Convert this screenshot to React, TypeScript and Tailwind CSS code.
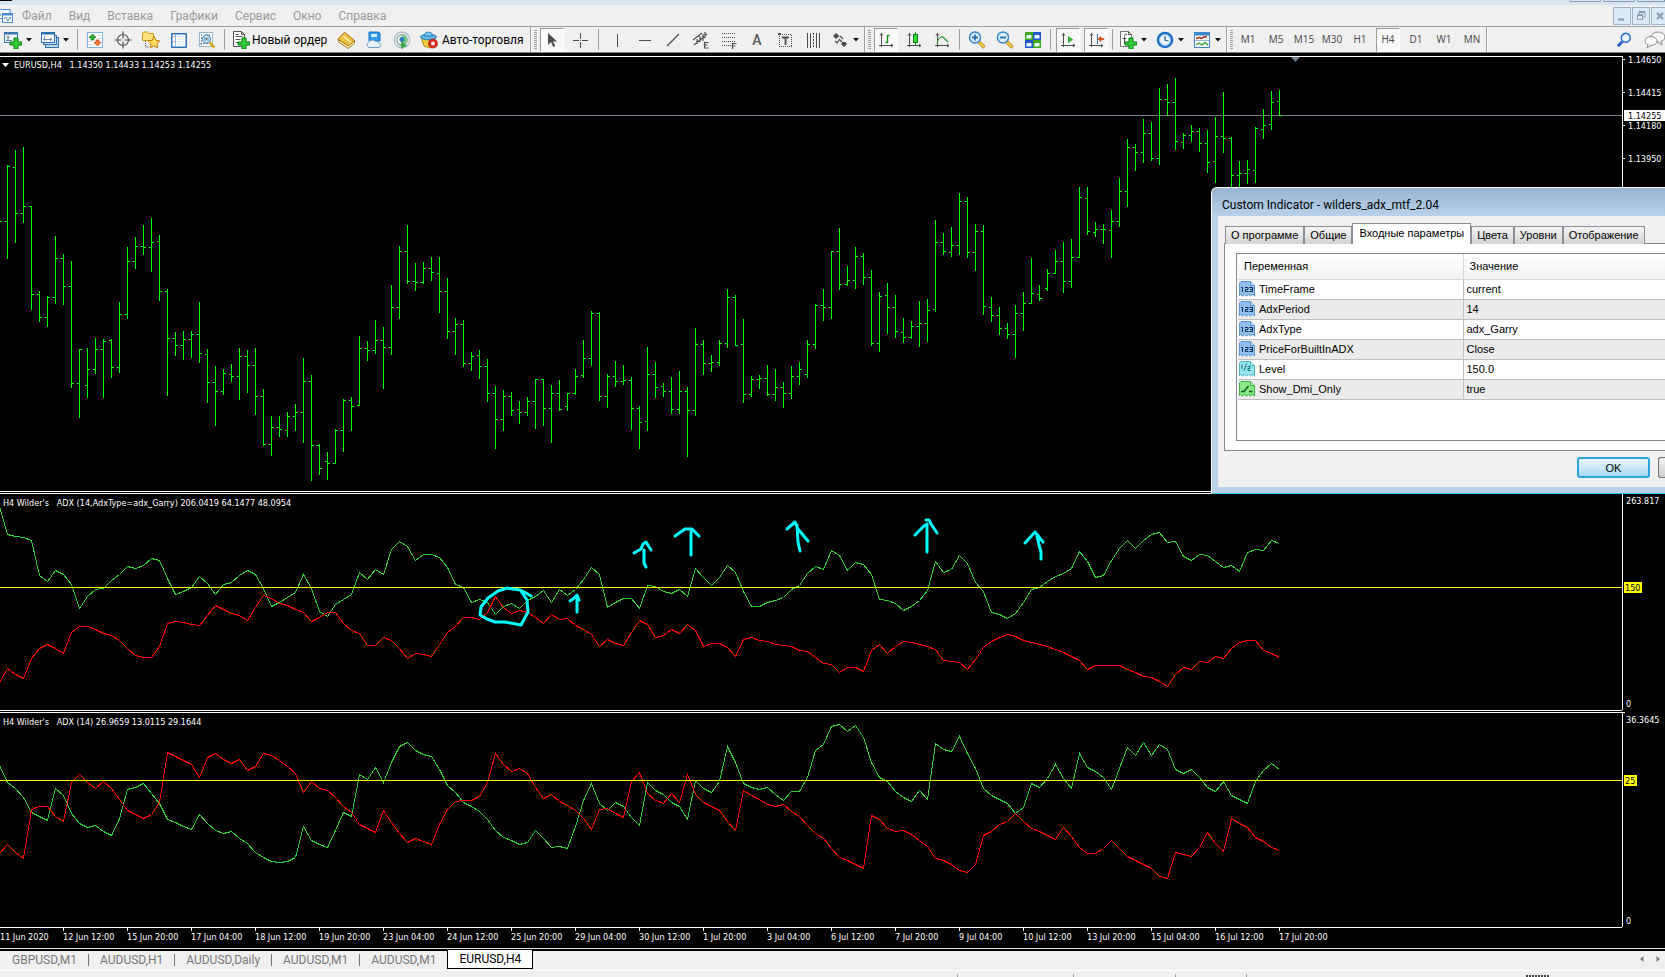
import type { ReactNode } from 'react';

// First bar sits one pixel left of the window, one bar every 8px
const STEP = 8;
const FIRST_X = -1;

// high, low, open, close
const bars: [number, number, number, number][] = [
  [200, 230, 221, 221],
  [165, 259, 221, 166], [150, 243, 167, 213], [147, 223, 213, 206], [206, 310, 206, 294],
  [291, 322, 294, 317], [296, 327, 317, 297], [236, 304, 297, 258], [254, 305, 258, 286],
  [261, 388, 286, 383], [349, 418, 383, 349], [348, 398, 385, 369], [338, 374, 369, 349],
  [339, 398, 349, 341], [339, 378, 340, 367], [302, 373, 367, 314], [247, 319, 314, 261],
  [237, 269, 261, 246], [225, 255, 246, 247], [218, 272, 247, 242], [235, 301, 241, 291],
  [289, 396, 291, 338], [332, 356, 338, 345], [331, 360, 345, 339], [331, 358, 339, 334],
  [302, 363, 334, 353], [349, 403, 354, 382], [366, 426, 382, 391], [369, 395, 391, 373],
  [364, 382, 374, 376], [348, 400, 376, 356], [350, 393, 356, 365], [348, 415, 365, 396],
  [389, 446, 396, 444], [416, 456, 444, 427], [416, 437, 427, 429], [412, 437, 430, 416],
  [404, 431, 416, 412], [358, 443, 412, 381], [375, 481, 381, 445], [444, 475, 445, 468],
  [452, 480, 461, 463], [429, 464, 463, 430], [399, 452, 430, 400], [397, 431, 400, 406],
  [336, 406, 405, 348], [341, 361, 348, 350], [320, 354, 350, 340], [327, 389, 340, 347],
  [285, 355, 347, 307], [246, 319, 307, 251], [225, 284, 251, 281], [263, 291, 281, 282],
  [262, 284, 282, 268], [257, 281, 268, 272], [257, 313, 273, 291], [278, 339, 291, 331],
  [318, 355, 331, 324], [320, 367, 324, 363], [352, 371, 363, 356], [350, 379, 355, 366],
  [359, 402, 366, 393], [386, 449, 393, 419], [390, 431, 419, 396], [392, 416, 396, 410],
  [401, 424, 409, 412], [397, 416, 412, 401], [379, 429, 401, 379], [379, 426, 379, 408],
  [385, 443, 408, 393], [380, 411, 393, 409], [393, 411, 406, 393], [369, 395, 393, 376],
  [340, 378, 375, 358], [311, 366, 358, 313], [312, 401, 313, 396], [374, 408, 396, 376],
  [361, 387, 376, 381], [365, 385, 381, 380], [377, 430, 380, 408], [406, 449, 408, 422],
  [347, 431, 421, 374], [362, 398, 374, 387], [383, 397, 386, 391], [377, 414, 391, 409],
  [371, 414, 409, 391], [387, 457, 391, 410], [328, 416, 410, 344], [340, 375, 344, 363],
  [355, 372, 363, 362], [340, 366, 362, 343], [289, 348, 343, 297], [295, 346, 297, 345],
  [319, 403, 344, 394], [376, 397, 394, 379], [375, 389, 379, 378], [365, 396, 378, 394],
  [369, 401, 394, 387], [382, 408, 387, 393], [366, 399, 393, 376], [362, 385, 376, 369],
  [340, 378, 374, 344], [304, 349, 344, 305], [289, 321, 305, 307], [251, 319, 307, 251],
  [228, 290, 251, 284], [266, 286, 284, 280], [247, 289, 280, 256], [253, 285, 256, 277],
  [270, 346, 277, 343], [292, 352, 343, 296], [283, 334, 295, 307], [295, 338, 307, 331],
  [318, 343, 332, 337], [321, 339, 337, 326], [301, 347, 326, 323], [299, 342, 323, 310],
  [220, 312, 309, 242], [233, 255, 242, 251], [227, 257, 252, 245], [193, 255, 245, 201],
  [197, 258, 201, 252], [224, 271, 252, 231], [225, 315, 231, 306], [297, 322, 307, 315],
  [307, 335, 315, 328], [323, 339, 328, 334], [305, 358, 334, 313], [292, 331, 313, 303],
  [258, 304, 303, 293], [285, 301, 294, 298], [269, 291, 288, 273], [250, 274, 273, 261],
  [242, 293, 261, 281], [239, 288, 281, 257], [187, 258, 257, 197], [187, 235, 198, 231],
  [222, 237, 232, 229], [224, 244, 229, 229], [210, 258, 230, 221], [178, 227, 221, 191],
  [139, 207, 191, 147], [144, 171, 147, 152], [119, 163, 152, 133], [122, 161, 133, 158],
  [88, 165, 158, 99], [84, 116, 99, 102], [78, 150, 102, 141], [133, 149, 142, 135],
  [125, 142, 135, 131], [128, 152, 131, 143], [130, 173, 143, 162], [117, 183, 161, 136],
  [92, 153, 136, 138], [137, 190, 138, 175], [161, 190, 175, 173], [160, 184, 173, 169],
  [127, 183, 170, 128], [109, 139, 129, 125], [91, 130, 124, 102], [90, 116, 101, 115],
];

const garryPlus = [
  506, 534, 536, 537, 540, 575, 581, 570, 574, 584, 608, 596, 589, 588, 580, 574, 566, 568, 565, 558,
  560, 578, 594, 591, 587, 576, 583, 594, 584, 582, 575, 570, 574, 588, 606, 602, 597, 592, 574, 588,
  611, 616, 604, 599, 594, 572, 579, 569, 574, 549, 541, 546, 560, 554, 554, 557, 567, 584, 587, 602,
  599, 602, 614, 606, 603, 608, 600, 596, 590, 602, 589, 595, 589, 579, 567, 574, 607, 602, 598, 598,
  608, 585, 586, 591, 593, 589, 596, 568, 577, 585, 577, 565, 572, 591, 606, 606, 602, 600, 597, 589,
  585, 573, 566, 569, 550, 555, 570, 562, 564, 574, 599, 600, 603, 610, 606, 600, 590, 561, 572, 569,
  555, 563, 582, 591, 612, 614, 618, 613, 602, 589, 587, 581, 576, 573, 568, 551, 561, 577, 575, 560,
  548, 540, 548, 540, 534, 532, 542, 541, 556, 560, 554, 555, 561, 567, 565, 571, 552, 549, 550, 540, 543,
];

const garryMinus = [
  682, 668, 674, 678, 658, 648, 644, 648, 653, 632, 626, 626, 629, 633, 635, 640, 648, 655, 657, 657,
  646, 623, 621, 622, 624, 625, 615, 605, 609, 613, 615, 620, 607, 595, 598, 603, 605, 609, 612, 621,
  617, 612, 612, 623, 630, 633, 645, 645, 637, 640, 648, 658, 653, 654, 656, 644, 632, 626, 617, 617,
  619, 612, 596, 607, 613, 610, 612, 617, 623, 614, 619, 618, 625, 629, 634, 646, 639, 643, 645, 632,
  620, 624, 637, 635, 629, 633, 624, 630, 646, 643, 643, 647, 656, 639, 637, 640, 641, 644, 645, 646,
  650, 651, 657, 663, 664, 672, 667, 667, 671, 650, 644, 653, 646, 641, 642, 644, 646, 649, 660, 661,
  662, 669, 659, 647, 641, 637, 634, 636, 640, 642, 644, 646, 649, 652, 656, 660, 669, 665, 665, 665,
  665, 669, 672, 676, 677, 681, 686, 674, 667, 669, 661, 662, 656, 658, 648, 642, 640, 640, 650, 653, 657,
];

const adxPlus = [
  765, 782, 788, 797, 812, 816, 820, 788, 795, 813, 823, 827, 825, 831, 835, 818, 789, 787, 783, 793,
  803, 819, 822, 826, 829, 814, 823, 830, 833, 831, 838, 843, 852, 857, 861, 862, 861, 857, 826, 840,
  844, 847, 830, 812, 816, 774, 779, 767, 782, 762, 746, 742, 750, 754, 756, 769, 785, 792, 802, 806,
  811, 819, 830, 837, 840, 844, 842, 830, 838, 847, 846, 848, 826, 800, 783, 803, 810, 802, 806, 817,
  825, 782, 790, 794, 802, 806, 819, 780, 788, 792, 781, 746, 762, 783, 787, 789, 787, 794, 800, 791,
  791, 777, 750, 744, 726, 724, 731, 725, 737, 762, 777, 781, 791, 797, 801, 790, 799, 743, 749, 751,
  736, 753, 768, 788, 795, 799, 803, 813, 807, 783, 787, 778, 764, 778, 788, 753, 767, 771, 777, 789,
  768, 747, 755, 742, 755, 744, 749, 769, 773, 769, 777, 787, 791, 781, 795, 799, 803, 781, 770, 763, 769,
];

const adxMinus = [
  853, 844, 852, 858, 809, 806, 806, 816, 821, 782, 774, 782, 788, 781, 788, 799, 810, 814, 818, 814,
  802, 752, 756, 760, 764, 777, 757, 753, 759, 763, 759, 770, 766, 753, 755, 760, 766, 773, 792, 781,
  788, 790, 797, 806, 812, 824, 828, 832, 810, 822, 833, 842, 838, 841, 844, 824, 809, 801, 800, 800,
  796, 782, 753, 764, 771, 768, 773, 787, 798, 794, 801, 805, 810, 818, 829, 809, 808, 813, 817, 781,
  772, 793, 800, 803, 793, 802, 774, 794, 802, 806, 810, 821, 830, 790, 795, 799, 804, 806, 804, 811,
  816, 825, 833, 838, 848, 857, 860, 864, 868, 815, 819, 828, 831, 830, 834, 840, 846, 858, 860, 864,
  870, 872, 864, 835, 831, 824, 821, 813, 821, 828, 831, 835, 839, 827, 836, 847, 853, 853, 848, 840,
  848, 856, 860, 864, 868, 876, 878, 852, 854, 856, 847, 832, 843, 851, 818, 823, 827, 837, 841, 847, 850,
];

const marks = [
  'M531 596 L526 593 L520 590 L507 588 L498 591 L488 598 L481 607 L480 615 L487 619 L495 622 L505 622 L521 625 L528 612 L527 600 L521 591',
  'M577 612 V596 M570 601 L573 599 L577 595 L579 600',
  'M644 550 V563 L646 567 M634 553 L641 549 L643 544 L646 542 L651 550',
  'M691 532 V555 M675 536 L685 529 H692 L699 536',
  'M797 525 L798 542 L800 551 M787 529 L795 522 L798 529 L808 541',
  'M927 524 V552 M915 535 L925 525 M926 520 H929 L931 524 L937 533',
  'M1025 543 L1035 532 L1043 542 M1037 536 L1039 545 L1041 552 V559',
];

const times = [
  '12 Jun 12:00', '15 Jun 20:00', '17 Jun 04:00', '18 Jun 12:00', '19 Jun 20:00', '23 Jun 04:00',
  '24 Jun 12:00', '25 Jun 20:00', '29 Jun 04:00', '30 Jun 12:00', '1 Jul 20:00', '3 Jul 04:00',
  '6 Jul 12:00', '7 Jul 20:00', '9 Jul 04:00', '10 Jul 12:00', '13 Jul 20:00', '15 Jul 04:00',
  '16 Jul 12:00', '17 Jul 20:00',
];

const menu = ['Файл', 'Вид', 'Вставка', 'Графики', 'Сервис', 'Окно', 'Справка'];
const periods = ['M1', 'M5', 'M15', 'M30', 'H1', 'H4', 'D1', 'W1', 'MN'];
const chartTabs = ['GBPUSD,M1', 'AUDUSD,H1', 'AUDUSD,Daily', 'AUDUSD,M1', 'AUDUSD,M1'];

const params = [
  { name: 'TimeFrame', value: 'current', kind: 'int' },
  { name: 'AdxPeriod', value: '14', kind: 'int' },
  { name: 'AdxType', value: 'adx_Garry', kind: 'int' },
  { name: 'PriceForBuiltInADX', value: 'Close', kind: 'int' },
  { name: 'Level', value: '150.0', kind: 'double' },
  { name: 'Show_Dmi_Only', value: 'true', kind: 'bool' },
];

function toPoints(values: number[]) {
  return values.map((y, i) => `${FIRST_X + i * STEP + 0.5},${y + 0.5}`).join(' ');
}

function Series({ values, color }: { values: number[]; color: string }) {
  return (
    <polyline
      points={toPoints(values)}
      fill="none"
      stroke={color}
      strokeWidth="1"
      shapeRendering="crispEdges"
    />
  );
}

/* ---------- toolbar icons ---------- */

function Icon({ children, size = 18 }: { children: ReactNode; size?: number }) {
  return (
    <svg width={size} height={size} viewBox="0 0 18 18" fill="none" className="shrink-0" aria-hidden="true">
      {children}
    </svg>
  );
}

const plus = (
  <path d="M10 7h4v4h4v3h-4v4h-4v-4H6v-3h4z" fill="#2fd02f" stroke="#0a7a12" strokeWidth="1" />
);

const NewChartIcon = () => (
  <Icon>
    <rect x="0.5" y="1.5" width="13" height="10" fill="#eef5fc" stroke="#3c78b4" />
    <path d="M1 2.5h12" stroke="#3c78b4" strokeWidth="2" />
    <path d="M4 5v5M2.500 6h3M2 9.500h6" stroke="#5f7f9f" />
    {plus}
  </Icon>
);

const ProfilesIcon = () => (
  <Icon>
    <rect x="4.500" y="6.500" width="13" height="10" fill="#b9d8f4" stroke="#2f6fb0" />
    <rect x="2.500" y="4.500" width="13" height="9" fill="#cfe3f6" stroke="#2f6fb0" />
    <rect x="0.500" y="1.500" width="13" height="10" fill="#fff" stroke="#2f6fb0" />
    <path d="M1 2.500h12" stroke="#2f6fb0" strokeWidth="2" />
    <path d="M3.500 5v5M2 8.500h9M9 7l2 1.500L9 10" stroke="#6a8cae" />
  </Icon>
);

const MarketWatchIcon = () => (
  <Icon>
    <rect x="1.500" y="1.500" width="15" height="15" fill="#fff" stroke="#7db3e8" />
    <path d="M12 4.500h3M12 7.500h3M3 10.500h3M3 13.500h4" stroke="#c5d5e5" />
    <path d="M6.500 3L10 6.500H8V9H5V6.500H3z" fill="#2db52d" stroke="#0b7a16" strokeWidth="0.7" />
    <path d="M11.500 15L8 11.500h2V9h3v2.500h2z" fill="#f08040" stroke="#c03a10" strokeWidth="0.7" />
  </Icon>
);

const DataWindowIcon = () => (
  <Icon>
    <circle cx="9" cy="9" r="5.500" stroke="#555" strokeWidth="1.200" />
    <path d="M9 0.500v7M9 10.500v7M0.500 9h7M10.500 9h7" stroke="#555" strokeWidth="1.200" />
  </Icon>
);

const NavigatorIcon = () => (
  <Icon>
    <path d="M0.500 2.500l1-1.500h4l1 1.500h5v7h-11z" fill="#ffe27a" stroke="#c79a1d" />
    <path d="M3.500 10v6h4" stroke="#444" strokeDasharray="1 1" />
    <path
      d="M12 5.500l1.900 3.900 4 .5-3 2.900.8 4.200-3.700-2.100L8.300 17l.8-4.200-3-2.900 4-.5z"
      fill="#ffd95c"
      stroke="#bf8410"
    />
  </Icon>
);

const TerminalIcon = () => (
  <Icon>
    <rect x="1" y="2" width="16" height="15" rx="1" fill="#2e6fb2" />
    <rect x="2.500" y="3.500" width="13" height="12" fill="#fff" />
    <path d="M5.500 4v11" stroke="#8fb8df" />
    <path d="M3.500 5.500h1M3.500 10.500h1" stroke="#e02a20" />
    <path d="M7 5.500h7M7 8h7M7 10.500h7M7 13h7" stroke="#cfdfee" />
  </Icon>
);

const TesterIcon = () => (
  <Icon>
    <rect x="1.500" y="1.500" width="13" height="14" fill="#fff" stroke="#9ab8d2" />
    <path d="M3.500 3v11M2 12.500h11M11.500 3v6" stroke="#7a8fa5" strokeDasharray="2 1" />
    <circle cx="8.500" cy="8" r="4" fill="#d7ecfb" stroke="#5b9bd0" strokeWidth="1.300" />
    <path d="M7 6v4M10 6v4M8.500 7v2" stroke="#5a7894" />
    <path d="M11.500 11.500l5 5" stroke="#d9a52c" strokeWidth="2.600" />
  </Icon>
);

const NewOrderIcon = () => (
  <Icon>
    <path d="M1.500 0.500h8l3 3v12h-11z" fill="#fff" stroke="#555" />
    <path d="M9.500 0.500v3h3M3.500 5.500h7M3.500 8.500h5M3.500 11.500h3M3.500 3.500h3" stroke="#555" />
    {plus}
  </Icon>
);

const MetaEditorIcon = () => (
  <Icon>
    <path d="M1 8.500l1 3 9.500 6 6-5.500v-2.500z" fill="#fff4cc" stroke="#a8720c" />
    <path d="M1 8.500C3 5.500 5 3 8 1.500l9.500 8-6 5.500z" fill="#eebf3e" stroke="#a8720c" />
    <path d="M6 5l8 6.500" stroke="#fbe7a0" strokeWidth="2" />
  </Icon>
);

const VpsIcon = () => (
  <Icon>
    <path d="M4 1h9l2 1v8H4z" fill="#2d9af0" stroke="#1673c0" />
    <path d="M6 3h6v3H6z" fill="#d9efff" />
    <path d="M4 16.500a3 3 0 010-5.500 4 4 0 016.500-.5 3 3 0 013.500 1.500 2.300 2.300 0 010 4.500z" fill="#e8f2fc" stroke="#7a9cc0" />
  </Icon>
);

const SignalsIcon = () => (
  <Icon>
    <circle cx="9" cy="9" r="7.800" stroke="#a9bccb" strokeWidth="1.200" />
    <circle cx="9" cy="9" r="5.300" stroke="#7fae95" strokeWidth="1.200" />
    <path d="M9 9l5 6.500A8 8 0 009 17z" fill="#3fae4a" />
    <path d="M9 4a5 5 0 013 9L9 9z" fill="#79c987" />
    <circle cx="9" cy="8.500" r="2.500" fill="#2d7ccb" />
    <path d="M9 10v7.500" stroke="#2f9a3c" strokeWidth="1.600" />
  </Icon>
);

const AutoTradeIcon = () => (
  <Icon>
    <path d="M1 6l3 9 7 2 4-10z" fill="#f5c93c" stroke="#b88a14" />
    <ellipse cx="8.500" cy="6" rx="8" ry="2.800" fill="#5fb7ea" stroke="#2c7fb8" />
    <path d="M4.500 5a4 4 0 018 0z" fill="#7fcaf4" stroke="#2c7fb8" />
    <circle cx="13" cy="12.500" r="4.500" fill="#e2261c" stroke="#a01008" strokeWidth="0.600" />
    <rect x="11.300" y="10.800" width="3.400" height="3.400" fill="#fff" />
  </Icon>
);

const CursorIcon = () => (
  <Icon>
    <path d="M5 2v12l3-3 2.300 5 2-1-2.300-4.500h4z" fill="#4d4d4d" />
  </Icon>
);

const CrosshairIcon = () => (
  <Icon>
    <path d="M9.500 2v5.500M9.500 11v5.500M2 9.500h5.500M11 9.500h6" stroke="#4d4d4d" shapeRendering="crispEdges" />
    <path d="M9.500 9v1" stroke="#4d4d4d" />
  </Icon>
);

const VLineIcon = () => <Icon><path d="M9.500 3v13" stroke="#4d4d4d" shapeRendering="crispEdges" /></Icon>;
const HLineIcon = () => <Icon><path d="M3 9.500h12" stroke="#4d4d4d" shapeRendering="crispEdges" /></Icon>;
const TrendIcon = () => <Icon><path d="M3 15L15 3" stroke="#4d4d4d" strokeWidth="1.200" /></Icon>;

const ChannelIcon = () => (
  <Icon>
    <path d="M1 9l9-7M2 14L15 3M5 8v5M8 5v6M11 3v7M13 1v6" stroke="#4d4d4d" strokeWidth="1.200" />
    <path d="M16.500 11.500h-4v5.500h4M12.500 14h3" stroke="#4d4d4d" strokeWidth="1.200" />
  </Icon>
);

const FiboIcon = () => (
  <Icon>
    <path d="M2 2.500h14M2 6.500h14M2 10.500h14M2 14.500h9" stroke="#4d4d4d" strokeDasharray="1 1" shapeRendering="crispEdges" />
    <path d="M16.500 12.500h-4V18M12.500 15h3" stroke="#4d4d4d" strokeWidth="1.200" />
  </Icon>
);

const LabelIcon = () => (
  <Icon>
    <rect x="3.500" y="3.500" width="12" height="12" stroke="#4d4d4d" strokeDasharray="1 1" shapeRendering="crispEdges" />
    <path d="M6 6.500h7M9.500 6.500V14" stroke="#4d4d4d" strokeWidth="1.800" />
    <path d="M2 2h3v2H2z" fill="#4d4d4d" />
  </Icon>
);

const CyclesIcon = () => (
  <Icon>
    <path d="M3.500 2v15M6.500 2v15M12.500 2v15M15.500 2v15" stroke="#4d4d4d" shapeRendering="crispEdges" />
    <path d="M9.500 2v15" stroke="#4d4d4d" strokeDasharray="2 1" shapeRendering="crispEdges" />
  </Icon>
);

const ShapesIcon = () => (
  <Icon>
    <path d="M5 2l3.500 3L5 8 2 5zM13 16l-3.500-3.500h7z M11 11h4v2h-4z" fill="#4d4d4d" />
    <path d="M4 10l2 2 2-3M8 8l3 3M9 5l3 3" stroke="#4d4d4d" strokeWidth="1.200" />
  </Icon>
);

const axes = (
  <path d="M4.500 2v14M2 14.500h14M3 4.500l1.500-2 1.500 2M14 13l2 1.500-2 1.500" stroke="#4d4d4d" />
);

const BarChartIcon = () => (
  <Icon>
    {axes}
    <path d="M10.500 4v8M10.500 4.500h2M8.500 11.500h2" stroke="#0b9a12" strokeWidth="1.400" />
  </Icon>
);

const CandleIcon = () => (
  <Icon>
    {axes}
    <path d="M10.500 1v13" stroke="#0b7a12" />
    <rect x="8.500" y="3.500" width="4" height="8" fill="#35dd35" stroke="#0b7a12" />
  </Icon>
);

const LineChartIcon = () => (
  <Icon>
    {axes}
    <path d="M4 12c2-6 5-8 7-5l4 4" stroke="#2a9a30" strokeWidth="1.200" />
  </Icon>
);

const ZoomIcon = ({ out }: { out?: boolean }) => (
  <Icon>
    <path d="M10.500 10.500l6 6" stroke="#b98a1e" strokeWidth="3.600" />
    <path d="M11 11l5 5" stroke="#f6cf4a" strokeWidth="2" />
    <circle cx="7" cy="6.500" r="5.500" fill="#d7ecfc" stroke="#3585cc" strokeWidth="1.400" />
    <path d={out ? 'M4 6.500h6' : 'M4 6.500h6M7 3.500v6'} stroke="#2f6fae" strokeWidth="1.800" />
  </Icon>
);

const TileIcon = () => (
  <Icon>
    <rect x="1" y="1" width="8" height="8" fill="#3fa71e" />
    <rect x="9" y="1" width="8" height="8" fill="#2458c8" />
    <rect x="1" y="9" width="8" height="8" fill="#2458c8" />
    <rect x="9" y="9" width="8" height="8" fill="#3fa71e" />
    <path d="M2.500 4h5v3.500h-5zM10.500 4h5v3.500h-5zM2.500 12h5v3.500h-5zM10.500 12h5v3.500h-5z" fill="#e8f3ff" />
  </Icon>
);

const AutoScrollIcon = () => (
  <Icon>
    {axes}
    <path d="M9.500 5.500l4 3-4 3z" fill="#2fc02f" stroke="#0b8a12" strokeWidth="0.600" />
  </Icon>
);

const ShiftIcon = () => (
  <Icon>
    {axes}
    <path d="M10.500 3v10" stroke="#2a78b8" />
    <path d="M11 8l3-2.500V7.500h3v1h-3v2z" fill="#e04a10" stroke="#c03a08" strokeWidth="0.600" />
  </Icon>
);

const IndicatorsIcon = () => (
  <Icon>
    <path d="M1.500 0.500h8l3 3v12h-11z" fill="#fff" stroke="#777" />
    <path d="M8 3.500c-2-1-2.500 0-2.500 2V13M3.500 7.500h4M9.500 0.500v3h3" stroke="#555" />
    {plus}
  </Icon>
);

const ClockIcon = () => (
  <Icon>
    <circle cx="9" cy="9" r="8.300" fill="#1f6fc8" />
    <circle cx="9" cy="9" r="5.500" fill="#eaf4ff" stroke="#8fc2f2" />
    <path d="M9 5v4l3.500 1" stroke="#355878" strokeWidth="1.200" />
  </Icon>
);

const TemplateIcon = () => (
  <Icon>
    <rect x="1.500" y="1.500" width="15" height="15" fill="#fff" stroke="#3d85cf" />
    <path d="M1 3h16" stroke="#3d85cf" strokeWidth="3" />
    <path d="M2 9.500h14" stroke="#9ab8d8" />
    <path d="M3 7.500l3-1 2 1 3-1.500 3-.5" stroke="#a82a12" strokeWidth="1.400" />
    <path d="M3 14l3-2 3 2 3-2.500 3 2.500" stroke="#2f9a30" strokeWidth="1.400" />
  </Icon>
);

/* ---------- toolbar parts ---------- */

function Caret() {
  return (
    <svg width="6" height="4" viewBox="0 0 6 4" className="shrink-0" aria-hidden="true">
      <path d="M0 0h6L3 3.500z" fill="#111" />
    </svg>
  );
}

function Tool({ label, pressed, children }: { label: string; pressed?: boolean; children: ReactNode }) {
  return (
    <button type="button" aria-label={label} className="flex h-6 w-7 shrink-0 items-center justify-center">
      <span
        className={
          pressed
            ? 'flex h-6 w-6 items-center justify-center border border-t-[#9a9a9a] border-r-white border-b-white border-l-[#9a9a9a] bg-[#f8f8f8]'
            : 'flex h-6 w-6 items-center justify-center'
        }
      >
        {children}
      </span>
    </button>
  );
}

function DropTool({ label, children }: { label: string; children: ReactNode }) {
  return (
    <button type="button" aria-label={label} className="flex h-6 w-[37px] shrink-0 items-center gap-1 pl-1">
      {children}
      <Caret />
    </button>
  );
}

const Divider = () => <span className="mx-[3px] h-[21px] w-px shrink-0 bg-[#a0a0a0]" />;

function Grip() {
  return (
    <>
      <span className="h-[25px] w-0.5 shrink-0 border-l border-[#a0a0a0] bg-white" />
      <span className="mr-px ml-0.5 h-5 w-[3px] shrink-0 bg-[repeating-linear-gradient(to_bottom,#a0a0a0_0px,#a0a0a0_1px,#f0f0f0_1px,#f0f0f0_2px)]" />
    </>
  );
}

function Toolbar() {
  return (
    <div className="flex h-[26px] items-center overflow-hidden border-b border-[#808080] bg-[#f0f0f0] text-xs text-black">
      <DropTool label="Новый график"><NewChartIcon /></DropTool>
      <DropTool label="Профили"><ProfilesIcon /></DropTool>
      <Divider />
      <Tool label="Обзор рынка"><MarketWatchIcon /></Tool>
      <Tool label="Окно данных"><DataWindowIcon /></Tool>
      <Tool label="Навигатор"><NavigatorIcon /></Tool>
      <Tool label="Терминал"><TerminalIcon /></Tool>
      <Tool label="Тестер"><TesterIcon /></Tool>
      <Divider />
      <button type="button" className="flex h-6 w-[104px] shrink-0 items-center gap-0.5 pl-1 whitespace-nowrap">
        <NewOrderIcon />
        Новый ордер
      </button>
      <Tool label="MetaEditor"><MetaEditorIcon /></Tool>
      <Tool label="VPS"><VpsIcon /></Tool>
      <Tool label="Сигналы"><SignalsIcon /></Tool>
      <button type="button" className="flex h-6 w-[114px] shrink-0 items-center gap-1 pl-1 whitespace-nowrap">
        <AutoTradeIcon />
        Авто-торговля
      </button>
      <Grip />
      <Tool label="Курсор" pressed><CursorIcon /></Tool>
      <Tool label="Перекрестие"><CrosshairIcon /></Tool>
      <span className="mx-1 h-[21px] w-px shrink-0 bg-[#a0a0a0]" />
      <Tool label="Вертикальная линия"><VLineIcon /></Tool>
      <Tool label="Горизонтальная линия"><HLineIcon /></Tool>
      <Tool label="Трендовая линия"><TrendIcon /></Tool>
      <Tool label="Канал"><ChannelIcon /></Tool>
      <Tool label="Фибоначчи"><FiboIcon /></Tool>
      <Tool label="Текст"><span className="text-sm font-medium text-[#5a5a5a]">A</span></Tool>
      <Tool label="Метка"><LabelIcon /></Tool>
      <Tool label="Циклы"><CyclesIcon /></Tool>
      <DropTool label="Стрелки"><ShapesIcon /></DropTool>
      <Grip />
      <Tool label="Бары" pressed><BarChartIcon /></Tool>
      <Tool label="Свечи"><CandleIcon /></Tool>
      <Tool label="Линия"><LineChartIcon /></Tool>
      <Divider />
      <Tool label="Увеличить"><ZoomIcon /></Tool>
      <Tool label="Уменьшить"><ZoomIcon out /></Tool>
      <Tool label="Окна мозаикой"><TileIcon /></Tool>
      <Divider />
      <Tool label="Автопрокрутка" pressed><AutoScrollIcon /></Tool>
      <Tool label="Сдвиг графика" pressed><ShiftIcon /></Tool>
      <span className="mx-0.5 h-[21px] w-px shrink-0 bg-[#a0a0a0]" />
      <DropTool label="Индикаторы"><IndicatorsIcon /></DropTool>
      <DropTool label="Периоды"><ClockIcon /></DropTool>
      <DropTool label="Шаблоны"><TemplateIcon /></DropTool>
      <Grip />
      {periods.map((p) => (
        <Tool key={p} label={p} pressed={p === 'H4'}>
          <span className="font-['Open_Sans',sans-serif] text-[10px] text-[#444]">{p}</span>
        </Tool>
      ))}
      <span className="h-[25px] w-0.5 shrink-0 border-l border-[#a0a0a0] bg-white" />
      <div className="ml-auto flex shrink-0 items-center gap-3">
        <button type="button" aria-label="Поиск">
          <Icon size={16}>
            <path d="M2 16l5-5" stroke="#2456c8" strokeWidth="3" />
            <circle cx="11" cy="6.500" r="5" fill="#eef5ff" stroke="#2d6bdc" strokeWidth="1.800" />
          </Icon>
        </button>
        <button type="button" aria-label="Сообщения">
          <svg width="21" height="18" viewBox="0 0 21 18" aria-hidden="true">
            <ellipse cx="14" cy="6" rx="7" ry="5" fill="#f4f4f4" stroke="#8f8f8f" />
            <path d="M17 10l1 4-5-3" fill="#f4f4f4" stroke="#8f8f8f" />
            <ellipse cx="7" cy="10" rx="6" ry="4.500" fill="#fff" stroke="#8f8f8f" />
            <path d="M4 14l-1 3 4-2.500" fill="#fff" stroke="#8f8f8f" />
          </svg>
        </button>
      </div>
    </div>
  );
}

function MenuBar() {
  return (
    <nav className="flex h-[22px] items-center border-b border-[#a0a0a0] bg-[#f0f0f0] text-xs text-[#9a9a9a]">
      <svg width="14" height="16" viewBox="0 0 14 16" fill="none" className="mr-2 shrink-0" aria-hidden="true">
        <rect x="-4" y="1.500" width="14" height="9" fill="#fff" stroke="#4a8be0" />
        <rect x="2.500" y="5.500" width="10" height="9" fill="#fff" stroke="#4a8be0" />
        <path d="M3 6.500h9" stroke="#4a8be0" strokeWidth="2" />
        <path d="M4 11l2-2 2 4 2-4 1 2M0 8l1-2" stroke="#4a8be0" />
      </svg>
      <ul className="flex gap-[17px]">
        {menu.map((m) => (
          <li key={m}><button type="button">{m}</button></li>
        ))}
      </ul>
      <div className="-mr-1.5 ml-auto flex gap-px">
        <button type="button" aria-label="Свернуть" className="h-[18px] w-[18px] border border-[#9fb2c6] bg-[#dce9f6]">
          <svg width="16" height="16" viewBox="0 0 16 16"><path d="M4 11.500h6" stroke="#8c9bac" strokeWidth="2" /></svg>
        </button>
        <button type="button" aria-label="Восстановить" className="h-[18px] w-[18px] border border-[#9fb2c6] bg-[#dce9f6]">
          <svg width="16" height="16" viewBox="0 0 16 16" fill="none" stroke="#8c9bac">
            <path d="M6 6V3.500h6V9H10M6 4.500h6M4.500 6.500h5v5h-5zM4.500 7.500h5" />
          </svg>
        </button>
        <button type="button" aria-label="Закрыть" className="h-[18px] w-[20px] border border-[#9fb2c6] bg-[#dce9f6]">
          <svg width="16" height="16" viewBox="0 0 16 16"><path d="M5 5l6 6M11 5l-6 6" stroke="#8c9bac" strokeWidth="2" /></svg>
        </button>
      </div>
    </nav>
  );
}

/* ---------- charts ---------- */

function PriceChart() {
  const scale = [
    { y: 60, text: '1.14650' },
    { y: 93, text: '1.14415' },
    { y: 126, text: '1.14180' },
    { y: 159, text: '1.13950' },
  ];
  return (
    <section className="flex h-[435px]" aria-label="EURUSD,H4">
      <div className="min-w-0 flex-1 border-t border-white">
        <svg width="100%" height="434" className="block overflow-hidden">
          <g transform="translate(0,-57)">
            <path d="M0 115.500h4000" stroke="#708090" shapeRendering="crispEdges" />
            <path
              d={bars
                .map(([h, l, o, c], i) => {
                  const x = FIRST_X + i * STEP;
                  return `M${x + 0.5} ${h}V${l}M${x - 2} ${o + 0.5}h2M${x + 1} ${c + 0.5}h2`;
                })
                .join('')}
              stroke="#00ff00"
              shapeRendering="crispEdges"
            />
            <path d="M1291 57h9l-4.500 5z" fill="#708090" />
            <path d="M2 63h7l-3.500 4z" fill="#fff" />
            <text x="14" y="68" fill="#fff">EURUSD,H4{'\u00a0\u00a0\u00a0'}1.14350 1.14433 1.14253 1.14255</text>
          </g>
        </svg>
      </div>
      <svg width="43" height="435" className="block shrink-0">
        <g transform="translate(0,-56)">
          <path d="M0.500 56V491" stroke="#fff" shapeRendering="crispEdges" />
          {scale.map((s) => (
            <g key={s.text}>
              <path d={`M1 ${s.y - 0.5}h2`} stroke="#fff" shapeRendering="crispEdges" />
              <text x="6" y={s.y + 3} fill="#fff">{s.text}</text>
            </g>
          ))}
          <rect x="2" y="110" width="41" height="11" fill="#fff" />
          <text x="6" y="119" fill="#000">1.14255</text>
        </g>
      </svg>
    </section>
  );
}

interface IndicatorProps {
  title: string;
  top: number;
  height: number;
  level: number;
  levelText: string;
  max: string;
  plusDi: number[];
  minusDi: number[];
  children?: ReactNode;
}

function IndicatorChart({ title, top, height, level, levelText, max, plusDi, minusDi, children }: IndicatorProps) {
  const shift = `translate(0,${-top})`;
  return (
    <section className="flex" aria-label={title}>
      <div className="min-w-0 flex-1">
        <svg width="100%" height={height} className="block overflow-hidden">
          <g transform={shift}>
            <path d={`M0 ${top + 0.5}h4000`} stroke="#fff" shapeRendering="crispEdges" />
            <Series values={plusDi} color="#32cd32" />
            <Series values={minusDi} color="#ff0000" />
            <path d={`M0 ${level + 0.5}h4000`} stroke="#ffff00" shapeRendering="crispEdges" />
            {children}
            <text x="3" y={top + 13} fill="#fff">{title}</text>
          </g>
        </svg>
      </div>
      <svg width="43" height={height} className="block shrink-0">
        <g transform={shift}>
          <path d={`M3 ${top + 0.5}H0.500V${top + height}`} fill="none" stroke="#fff" shapeRendering="crispEdges" />
          <text x="4" y={top + 11} fill="#fff">{max}</text>
          <rect x="2" y={level - 5} width={levelText.length * 5 + 3} height="11" fill="#ffff00" />
          <text x="3" y={level + 4} fill="#000">{levelText}</text>
          <text x="4" y={top + height - 3} fill="#fff">0</text>
        </g>
      </svg>
    </section>
  );
}

function TimeAxis() {
  return (
    <div className="flex h-[21px] overflow-hidden text-white">
      <div className="flex min-w-0 flex-1 overflow-hidden border-t border-white whitespace-nowrap">
        <span className="w-[63px] shrink-0 pt-[3px] leading-3">11 Jun 2020</span>
        {times.map((t) => (
          <span key={t} className="w-16 shrink-0">
            <span className="block h-[3px] w-px bg-white" />
            <span className="block leading-3">{t}</span>
          </span>
        ))}
      </div>
      <span className="w-[43px] shrink-0" />
    </div>
  );
}

/* ---------- dialog ---------- */

function ParamIcon({ kind }: { kind: string }) {
  const fill = kind === 'int' ? '#8fbdec' : kind === 'double' ? '#97e3ee' : '#86e886';
  const line = kind === 'int' ? '#5b95d0' : kind === 'double' ? '#4fb3c2' : '#3faf49';
  const ink = kind === 'int' ? '#0c2c55' : kind === 'double' ? '#12707e' : '#0b5a14';
  return (
    <svg width="16" height="16" viewBox="0 0 16 16" fill="none" className="shrink-0" aria-hidden="true">
      <path d="M0.500 2L2 0.500h9.500l4 4V15l-2-1.500-2 1.500-2-1.500-2 1.500-2-1.500-2 1.500-2-1.500-1 1z" fill={fill} stroke={line} />
      <path d="M11.500 0.500v4h4" fill="#fff" fillOpacity="0.500" stroke={line} />
      {kind === 'int' && (
        <path d="M2 6.500h1.500V11M6 6.500h3v2H6.500V10.500H9.500M10.500 6.500h3v4h-3M11 8.500h2" stroke={ink} />
      )}
      {kind === 'double' && <path d="M3 3.500V8M7.500 2.500L5 10M8.500 5.500h2.500v2H9v2h2.500" stroke={ink} />}
      {kind === 'bool' && <path d="M2 10.500h3L9.500 5M10 10.500h3.500" stroke={ink} strokeWidth="1.400" />}
    </svg>
  );
}

function IndicatorDialog() {
  const tab =
    'h-[18px] shrink-0 border border-b-0 border-[#8a8e96] bg-linear-to-b from-[#f4f4f4] to-[#d4d4d4] px-[5px] pb-0.5 leading-4';
  return (
    <div
      role="dialog"
      aria-label="Custom Indicator"
      className="absolute top-[134px] right-0 h-[307px] w-[454px] overflow-hidden rounded-tl-md border-t border-b border-l border-t-white border-b-[#2ec4dc] border-l-white bg-[#b9d1ea] pl-1.5 text-black"
    >
      <div className="-ml-1.5 flex h-7 items-center bg-linear-to-b from-[#98b4d2] to-[#b9d1ea] pt-1.5 pl-[10px] text-xs">
        Custom Indicator - wilders_adx_mtf_2.04
      </div>
      <div className="h-[271px] overflow-hidden bg-[#f0f0f0] pt-[7px] pl-1.5 font-['Liberation_Sans',sans-serif] text-[11px] whitespace-nowrap">
        <div role="tablist" className="relative -mb-px flex items-end pl-px">
          <button type="button" role="tab" className={tab}>О программе</button>
          <button type="button" role="tab" className={tab}>Общие</button>
          <button
            type="button"
            role="tab"
            aria-selected="true"
            className="h-[21px] shrink-0 border border-b-0 border-[#8a8e96] bg-white px-1.5 pb-0.5 leading-4"
          >
            Входные параметры
          </button>
          <button type="button" role="tab" className={tab}>Цвета</button>
          <button type="button" role="tab" className={tab}>Уровни</button>
          <button type="button" role="tab" className={tab}>Отображение</button>
        </div>
        <div className="h-52 border border-r-0 border-[#828790] bg-white pt-[9px] pl-[11px]">
          <div className="h-[188px] border border-r-0 border-[#828790] pl-px">
            <table className="w-full table-fixed border-collapse text-left">
              <thead>
                <tr className="h-[25px] bg-linear-to-b from-white to-[#f1f2f4]">
                  <th className="w-[225px] border-r border-b border-[#d5d5d5] pl-1.5 font-normal">Переменная</th>
                  <th className="border-b border-[#d5d5d5] pl-1.5 font-normal">Значение</th>
                </tr>
              </thead>
              <tbody>
                {params.map((p) => (
                  <tr key={p.name} className="h-5 border-b border-[#bfbfbf] even:bg-[#ebebeb]">
                    <td className="border-r border-[#bfbfbf] p-0">
                      <span className="flex items-center gap-1 pl-px">
                        <ParamIcon kind={p.kind} />
                        {p.name}
                      </span>
                    </td>
                    <td className="p-0 pl-[3px]">{p.value}</td>
                  </tr>
                ))}
              </tbody>
            </table>
          </div>
        </div>
        <div className="mt-1.5 flex justify-end gap-2">
          <button
            type="button"
            className="h-[21px] w-[73px] shrink-0 rounded-[3px] border-2 border-[#2aa6dc] bg-linear-to-b from-[#eaf6fd] to-[#a9d9f2] leading-4"
          >
            OK
          </button>
          <button
            type="button"
            aria-label="Отмена"
            className="h-[21px] w-[7px] shrink-0 rounded-l-[3px] border border-r-0 border-[#707070] bg-linear-to-b from-[#f2f2f2] to-[#cfcfcf]"
          />
        </div>
      </div>
    </div>
  );
}

export default function App() {
  return (
    <div className="flex min-h-screen flex-col overflow-hidden bg-[#f0f0f0] font-[Roboto,'Noto_Sans',sans-serif]">
      {/* Bottom edge of the window caption */}
      <div className="flex h-[5px] justify-end gap-0.5 bg-[#d7e4f2]">
        <span className="mr-auto h-px w-3 bg-black" />
        <span className="h-0.5 w-8 rounded-b border border-t-0 border-[#8a9bb0]" />
        <span className="h-0.5 w-8 rounded-b border border-t-0 border-[#8a9bb0]" />
        <span className="h-0.5 w-7 rounded-bl border border-t-0 border-[#8a9bb0]" />
      </div>
      <MenuBar />
      <Toolbar />

      <main className="relative flex flex-col overflow-hidden bg-black pt-[3px] font-['DejaVu_Sans_Condensed','DejaVu_Sans',sans-serif] text-[9px]">
        <PriceChart />
        <div className="mr-[43px] mb-px h-px bg-white" />
        <IndicatorChart
          title={'H4 Wilder\'s\u00a0\u00a0\u00a0ADX (14,AdxType=adx_Garry) 206.0419 64.1477 48.0954'}
          top={493}
          height={217}
          level={587}
          levelText="150"
          max="263.817"
          plusDi={garryPlus}
          minusDi={garryMinus}
        >
          {marks.map((d) => (
            <path key={d} d={d} fill="none" stroke="#00ffff" strokeWidth="3" strokeLinecap="round" strokeLinejoin="round" />
          ))}
        </IndicatorChart>
        <div className="mr-[43px] mb-px h-px bg-white" />
        <IndicatorChart
          title={'H4 Wilder\'s\u00a0\u00a0\u00a0ADX (14) 26.9659 13.0115 29.1644'}
          top={712}
          height={215}
          level={780}
          levelText="25"
          max="36.3645"
          plusDi={adxPlus}
          minusDi={adxMinus}
        />
        <TimeAxis />
        <div className="font-[Roboto,'Noto_Sans',sans-serif]">
          <IndicatorDialog />
        </div>
      </main>

      <div className="mb-px h-px bg-[#e8e4e8]" />
      <div className="-mt-px h-0.5 bg-black" />
      <div className="flex h-5 items-start border-b border-white text-xs text-[#777]">
        <div role="tablist" className="-mt-px flex h-[19px] items-center pl-px">
          {chartTabs.map((t, i) => (
            <button
              key={i}
              type="button"
              role="tab"
              className="flex h-[19px] items-center px-[11px] after:-mr-[11px] after:ml-[11px] after:h-3 after:w-px after:bg-[#777]"
            >
              {t}
            </button>
          ))}
          <button type="button" role="tab" aria-selected="true" className="-ml-px h-[19px] border border-t-0 border-black bg-white px-[11px] leading-4 text-black">
            EURUSD,H4
          </button>
        </div>
        <div className="ml-auto flex gap-3 pt-1 pr-1">
          <button type="button" aria-label="Назад"><svg width="5" height="8" viewBox="0 0 5 8"><path d="M4.500 1v6L1 4z" fill="#777" /></svg></button>
          <button type="button" aria-label="Вперёд"><svg width="5" height="8" viewBox="0 0 5 8"><path d="M0.500 1v6L4 4z" fill="#777" /></svg></button>
        </div>
      </div>
      <footer className="flex h-[6px] items-end justify-end">
        <span className="h-[3px] w-[116px] border-l border-[#a0a0a0]" />
        <span className="h-[3px] w-[102px] border-l border-[#a0a0a0]" />
        <span className="h-[3px] w-[71px] border-l border-[#a0a0a0]" />
        <span className="h-[3px] w-[280px] border-l border-[#a0a0a0]" />
        <span className="h-0.5 w-6 bg-[repeating-linear-gradient(to_right,#444_0px,#444_2px,#f0f0f0_2px,#f0f0f0_3px)]" />
        <span className="h-[3px] w-[115px]" />
      </footer>
    </div>
  );
}
